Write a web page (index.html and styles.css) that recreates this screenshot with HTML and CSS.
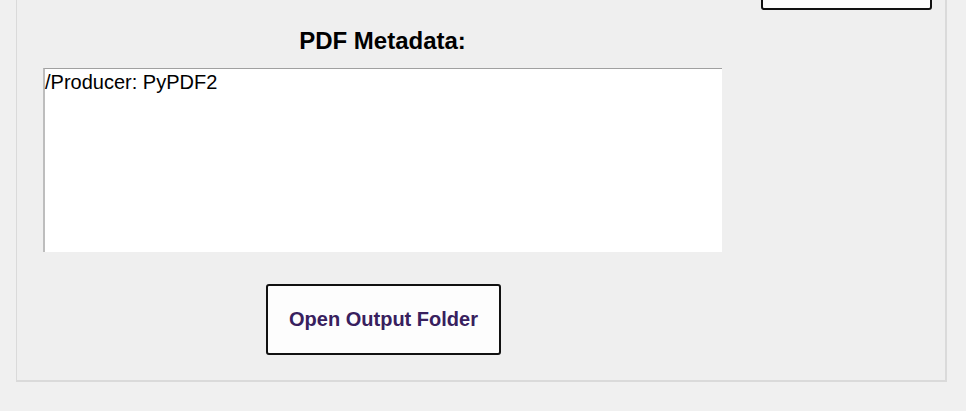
FILE: index.html
```html
<!DOCTYPE html>
<html>
<head>
<meta charset="utf-8">
<link rel="stylesheet" href="styles.css">
</head>
<body>
<div class="frame">
  <div class="top-left"></div>
  <div class="top-right"><button class="btn btn-top"></button></div>
  <div class="main">
    <div class="title">PDF Metadata:</div>
    <div class="meta-box">/Producer: PyPDF2</div>
    <button class="btn btn-open">Open Output Folder</button>
  </div>
  <div class="side"></div>
</div>
</body>
</html>
```
FILE: styles.css
```css
html, body {
  margin: 0;
  padding: 0;
  background: #f0f0f0;
  font-family: "Liberation Sans", Arial, sans-serif;
}
.frame {
  box-sizing: border-box;
  margin: -62px 0 0 16px;
  width: 931px;
  border: 1px solid #dadada;
  border-right: 2px solid #dadada;
  border-bottom: 2px solid #dadada;
  padding: 0 13px 25px 26px;
  display: grid;
  grid-template-columns: 679px 171px;
  column-gap: 39px;
  background: #efefef;
}
.btn {
  box-sizing: border-box;
  background: #fdfdfd;
  border: 2px solid #111;
  border-radius: 3px;
  font-family: "Liberation Sans", Arial, sans-serif;
  padding: 0;
}
.btn-top {
  width: 171px;
  height: 71px;
  display: block;
}
.main {
  display: flex;
  flex-direction: column;
  align-items: center;
}
.title {
  margin-top: 17px;
  font-size: 24px;
  line-height: 28px;
  font-weight: bold;
  color: #000;
  align-self: stretch;
  text-align: center;
}
.meta-box {
  box-sizing: border-box;
  margin-top: 13px;
  align-self: stretch;
  height: 184px;
  background: #fff;
  border-top: 1px solid #a0a0a0;
  border-left: 2px solid #bdbdbd;
  padding: 2px 0 0 0;
  font-size: 20px;
  line-height: 23px;
  color: #000;
}
.btn-open {
  margin-top: 32px;
  margin-left: 2px;
  width: 235px;
  height: 71px;
  font-size: 20px;
  font-weight: bold;
  color: #38205e;
}
```
